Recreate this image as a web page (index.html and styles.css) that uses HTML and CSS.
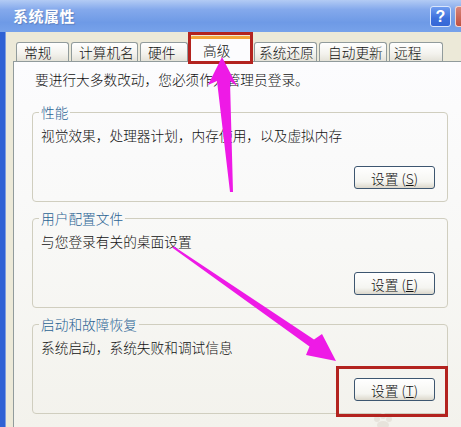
FILE: index.html
```html
<!DOCTYPE html>
<html lang="zh-CN">
<head>
<meta charset="utf-8">
<title>系统属性</title>
<link rel="stylesheet" href="styles.css">
</head>
<body>
<div class="window">
  <div class="titlebar">
    <span class="title">系统属性</span>
    <span class="help">?</span>
    <span class="close"></span>
  </div>
  <div class="frame">
    <div class="client">
      <div class="tabs">
        <div class="tab t1">常规</div>
        <div class="tab t2">计算机名</div>
        <div class="tab t3">硬件</div>
        <div class="tab t4 active">高级</div>
        <div class="tab t5">系统还原</div>
        <div class="tab t6">自动更新</div>
        <div class="tab t7">远程</div>
      </div>
      <div class="panel">
        <p class="intro">要进行大多数改动，您必须作为管理员登录。</p>
        <fieldset class="group">
          <legend>性能</legend>
          <p class="desc">视觉效果，处理器计划，内存使用，以及虚拟内存</p>
          <button class="btn">设置 (<u>S</u>)</button>
        </fieldset>
        <fieldset class="group">
          <legend>用户配置文件</legend>
          <p class="desc">与您登录有关的桌面设置</p>
          <button class="btn">设置 (<u>E</u>)</button>
        </fieldset>
        <fieldset class="group">
          <legend>启动和故障恢复</legend>
          <p class="desc">系统启动，系统失败和调试信息</p>
          <button class="btn">设置 (<u>T</u>)</button>
        </fieldset>
      </div>
    </div>
  </div>
  <svg class="annot" width="461" height="427" viewBox="0 0 461 427" xmlns="http://www.w3.org/2000/svg">
    <g fill="#e6e2da" opacity="0.9">
      <circle cx="377" cy="419" r="3"/>
      <circle cx="383" cy="416" r="3"/>
      <circle cx="389" cy="419" r="3"/>
      <ellipse cx="383" cy="425" rx="6" ry="4"/>
    </g>
    <rect x="189.5" y="33.5" width="62" height="29" fill="none" stroke="#b3231f" stroke-width="3"/>
    <rect x="337.5" y="367.5" width="109" height="48" fill="none" stroke="#b3231f" stroke-width="3"/>
    <polygon fill="#ee1ae6" points="222,57 237,86 230,81 233,192 230,192 217,81 208,85"/>
    <polygon fill="#ee1ae6" points="173.6,246.2 314,339.5 322,334 336,361 306,355 309.5,346.5 172.4,247.8"/>
  </svg>
</div>
</body>
</html>
```

FILE: styles.css
```css
html, body {
  margin: 0;
  padding: 0;
}

body {
  width: 461px;
  height: 427px;
  overflow: hidden;
  font-family: "Noto Sans CJK SC", "Noto Sans", sans-serif;
  font-size: 13.7px;
  font-weight: 300;
  color: #111;
}

.window {
  position: relative;
  width: 461px;
  height: 427px;
  background: #ece9d8;
  overflow: hidden;
}

.titlebar {
  height: 32px;
  display: flex;
  align-items: center;
  padding-left: 13px;
  background: linear-gradient(#b3cbf4 0%, #84a9ec 30%, #6e9ae6 70%, #77a2ea 100%);
  box-sizing: border-box;
}

.title {
  color: #fff;
  font-weight: bold;
  font-size: 15px;
  line-height: 18px;
  text-shadow: 1px 1px 1px #5f80c0;
  letter-spacing: 0.5px;
}

.help {
  margin-left: auto;
  margin-right: 4px;
  width: 19px;
  height: 19px;
  border: 1px solid #dbe6fb;
  border-radius: 3px;
  background: linear-gradient(#6f9cf0, #3c6fdc 60%, #3667d6);
  color: #fff;
  font-family: "Liberation Sans", sans-serif;
  font-weight: bold;
  font-size: 16px;
  line-height: 19px;
  text-align: center;
}

.close {
  width: 6px;
  height: 21px;
  border-radius: 3px 0 0 3px;
  background: linear-gradient(#d7847a, #c0503f);
  border-left: 1px solid #f0d2cc;
  border-top: 1px solid #f0d2cc;
  border-bottom: 1px solid #f0d2cc;
  box-sizing: border-box;
}

.frame {
  display: flex;
  height: 395px;
  border-left: 5px solid #2f61d4;
  box-shadow: inset 1px 0 0 #7e9de0;
}

.client {
  flex: 1;
  padding-left: 8px;
}

.tabs {
  display: flex;
  align-items: flex-end;
  gap: 2px;
  height: 29px;
  padding-left: 3px;
  position: relative;
  z-index: 1;
}

.tab {
  height: 19px;
  box-sizing: border-box;
  border: 1px solid #919b9c;
  border-bottom: none;
  border-radius: 3px 3px 0 0;
  background: linear-gradient(#ffffff, #f3f2ed 60%, #e4e2d8);
  line-height: 18px;
  padding-left: 7px;
  white-space: nowrap;
}

.t1 { width: 53px; }
.t2 { width: 67px; }
.t3 { width: 48px; }
.t4 { width: 62px; padding-left: 12px; }
.t5 { width: 63px; padding-left: 4px; }
.t6 { width: 68px; padding-left: 8px; }
.t7 { width: 54px; padding-left: 4px; }

.tab.active {
  height: 26px;
  margin-bottom: -1px;
  background: #fcfcfe;
  border-top: 3px solid #f3a53a;
  line-height: 22px;
}

.panel {
  height: 366px;
  box-sizing: border-box;
  border-top: 1px solid #919b9c;
  border-left: 1px solid #919b9c;
  background: linear-gradient(#fcfcfe, #f8f8f6 50%, #f3f2ec);
  overflow: hidden;
}

.intro {
  margin: 0;
  padding: 9px 0 0 21px;
  line-height: 16px;
}

.group {
  margin: 17px 0 0 18px;
  width: 416px;
  box-sizing: border-box;
  padding: 0 12px 12px 6px;
  border: 1px solid #d0cebf;
  border-radius: 4px;
  display: flex;
  flex-direction: column;
}

.group + .group {
  margin-top: 8px;
}

.group legend {
  padding: 0 2px;
  line-height: 16px;
  color: #2b6494;
}

.desc {
  margin: 7px 0 0 2px;
  line-height: 16px;
}

.btn {
  align-self: flex-end;
  margin-top: 23px;
  width: 81px;
  height: 23px;
  padding: 0;
  border: 1px solid #3d5670;
  border-radius: 3px;
  background: linear-gradient(#ffffff, #f5f5f1 70%, #dcd8cc);
  font-family: inherit;
  font-size: 13.7px;
  font-weight: 300;
  color: #111;
  line-height: 20px;
}

.btn u {
  text-decoration: underline;
}

.annot {
  position: absolute;
  left: 0;
  top: 0;
  pointer-events: none;
  z-index: 5;
}
```
